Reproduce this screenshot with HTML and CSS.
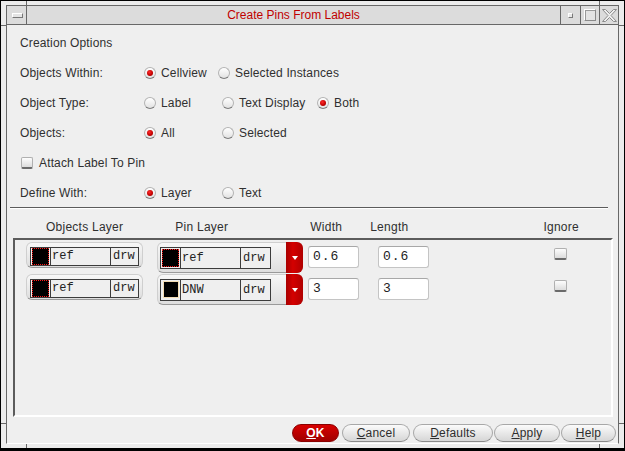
FILE: index.html
```html
<!DOCTYPE html>
<html>
<head>
<meta charset="utf-8">
<link rel="stylesheet" href="styles.css">
</head>
<body>
<div class="window">
  <span class="mark mv m-tl"></span>
  <span class="mark mv m-tr"></span>
  <span class="mark mv m-bl"></span>
  <span class="mark mv m-br"></span>
  <span class="mark mh m-lt"></span>
  <span class="mark mh m-rt"></span>
  <span class="mark mh m-lb"></span>
  <span class="mark mh m-rb"></span>
  <div class="frame">
    <div class="titlebar">
      <div class="tb-menu"><span class="menu-bar"></span></div>
      <div class="tb-title">Create Pins From Labels</div>
      <div class="tb-btn tb-min"><span class="min-glyph"></span></div>
      <div class="tb-btn tb-max"><span class="max-glyph"></span></div>
      <div class="tb-btn tb-close">
        <svg width="15" height="13" viewBox="0 0 15 13"><polygon points="0.5,0.5 3.5,0.5 7.5,4.5 11.5,0.5 14.5,0.5 9,6.5 14.5,12.5 11.5,12.5 7.5,8.5 3.5,12.5 0.5,12.5 6,6.5" fill="#efefef" stroke="#8c8c8c" stroke-width="1"/></svg>
      </div>
    </div>
    <div class="content">
      <div class="options">
        <div class="row"><span class="section">Creation Options</span></div>
        <div class="row">
          <span class="label">Objects Within:</span>
          <span class="opt w74"><span class="radio on"></span>Cellview</span>
          <span class="opt"><span class="radio"></span>Selected Instances</span>
        </div>
        <div class="row">
          <span class="label">Object Type:</span>
          <span class="opt w78"><span class="radio"></span>Label</span>
          <span class="opt w95"><span class="radio"></span>Text Display</span>
          <span class="opt"><span class="radio on"></span>Both</span>
        </div>
        <div class="row">
          <span class="label">Objects:</span>
          <span class="opt w78"><span class="radio on"></span>All</span>
          <span class="opt"><span class="radio"></span>Selected</span>
        </div>
        <div class="row">
          <span class="opt check-opt"><span class="checkbox"></span>Attach Label To Pin</span>
        </div>
        <div class="row last">
          <span class="label">Define With:</span>
          <span class="opt w78"><span class="radio on"></span>Layer</span>
          <span class="opt"><span class="radio"></span>Text</span>
        </div>
      </div>
      <div class="sep"></div>
      <div class="thead">
        <span class="th th-obj">Objects Layer</span>
        <span class="th th-pin">Pin Layer</span>
        <span class="th th-width">Width</span>
        <span class="th th-length">Length</span>
        <span class="th th-ignore">Ignore</span>
      </div>
      <div class="panel">
        <div class="trow">
          <div class="objw">
            <div class="lbox">
              <span class="sw"><span class="chip dotted"></span></span>
              <span class="lname">ref</span>
              <span class="lpurp">drw</span>
            </div>
          </div>
          <div class="pinw">
            <div class="lbox pbox">
              <span class="sw"><span class="chip dotted"></span></span>
              <span class="lname">ref</span>
              <span class="lpurp">drw</span>
            </div>
            <span class="drop"><span class="tri"></span></span>
          </div>
          <div class="inp inp-w">0.6</div>
          <div class="inp inp-l">0.6</div>
          <span class="checkbox ign"></span>
        </div>
        <div class="trow">
          <div class="objw">
            <div class="lbox">
              <span class="sw"><span class="chip dotted"></span></span>
              <span class="lname">ref</span>
              <span class="lpurp">drw</span>
            </div>
          </div>
          <div class="pinw">
            <div class="lbox pbox">
              <span class="sw"><span class="chip beige"></span></span>
              <span class="lname">DNW</span>
              <span class="lpurp">drw</span>
            </div>
            <span class="drop"><span class="tri"></span></span>
          </div>
          <div class="inp inp-w">3</div>
          <div class="inp inp-l">3</div>
          <span class="checkbox ign"></span>
        </div>
      </div>
      <div class="buttons">
        <span class="btn btn-ok"><u>O</u>K</span>
        <span class="btn btn-cancel"><u>C</u>ancel</span>
        <span class="btn btn-defaults"><u>D</u>efaults</span>
        <span class="btn btn-apply"><u>A</u>pply</span>
        <span class="btn btn-help"><u>H</u>elp</span>
      </div>
    </div>
  </div>
</div>
</body>
</html>
```

FILE: styles.css
```css
* { box-sizing: border-box; }
html, body { margin: 0; padding: 0; }
body {
  width: 625px;
  height: 451px;
  overflow: hidden;
  font-family: "Liberation Sans", Arial, sans-serif;
  font-size: 12px;
  color: #303030;
  background: #efefef;
}
.window {
  position: relative;
  width: 625px;
  height: 451px;
  border: 1px solid #000;
  border-bottom-width: 3px;
  background: #ececec;
  padding: 4px 5px;
  display: flex;
}
/* resize-corner ticks on the window border */
.mark { position: absolute; background: #686868; }
.mv { width: 1px; }
.mh { height: 1px; width: 5px; }
.m-tl { left: 25px; top: 0; height: 5px; }
.m-tr { left: 598px; top: 0; height: 5px; }
.m-bl { left: 25px; top: 443px; height: 4px; }
.m-br { left: 598px; top: 443px; height: 4px; }
.m-lt { left: 0; top: 24px; }
.m-rt { left: 618px; top: 24px; }
.m-lb { left: 0; top: 422px; }
.m-rb { left: 618px; top: 422px; }
.frame {
  flex: 1;
  display: flex;
  flex-direction: column;
  border: 1px solid #686868;
  border-bottom-color: #fff;
  background: #efefef;
}
/* title bar */
.titlebar {
  height: 19px;
  flex: none;
  display: flex;
  background: #dcdcdc;
  border-bottom: 1px solid #686868;
}
.tb-menu {
  width: 20px;
  border-right: 1px solid #686868;
  display: flex;
  align-items: center;
  justify-content: center;
}
.menu-bar {
  width: 11px;
  height: 5px;
  margin-left: 1px;
  background: #e4e4e4;
  border: 1px solid #fff;
  border-right-color: #777;
  border-bottom-color: #777;
}
.tb-title {
  flex: 1;
  text-align: center;
  color: #c00000;
  line-height: 18px;
}
.tb-btn {
  border-left: 1px solid #686868;
  display: flex;
  align-items: center;
  justify-content: center;
}
.tb-min { width: 20px; }
.tb-max { width: 19px; }
.tb-close { width: 19px; }
.min-glyph {
  width: 5px;
  height: 5px;
  border: 1px solid #fff;
  border-right-color: #7a7a7a;
  border-bottom-color: #7a7a7a;
  background: #e8e8e8;
}
.max-glyph {
  width: 12px;
  height: 12px;
  border: 1px solid #fff;
  border-right-color: #8a8a8a;
  border-bottom-color: #8a8a8a;
  box-shadow: inset 1px 1px 0 #9a9a9a;
  background: #e4e4e4;
}
.tb-close svg { display: block; }
/* content */
.content {
  flex: 1;
  display: flex;
  flex-direction: column;
  padding-top: 3px;
}
.options { padding-left: 13px; }
.row {
  height: 30px;
  display: flex;
  align-items: center;
  letter-spacing: 0.15px;
}
.row.last { height: 29px; }
.label { width: 124px; }
.opt { display: flex; align-items: center; }
.w74 { width: 74px; }
.w78 { width: 78px; }
.w95 { width: 95px; }
.radio {
  position: relative;
  width: 12px;
  height: 12px;
  margin-right: 5px;
  border-radius: 50%;
  border: 1px solid #b4b4b4;
  border-bottom-color: #7c7c7c;
  background: linear-gradient(#ffffff, #e2e2e2);
  flex: none;
}
.radio.on::after {
  content: "";
  position: absolute;
  left: 2px;
  top: 2px;
  width: 6px;
  height: 6px;
  border-radius: 50%;
  background: radial-gradient(circle at 40% 35%, #ff2a2a, #c00000 60%, #8a0000);
}
.checkbox {
  width: 12px;
  height: 12px;
  border: 1px solid #b0b0b0;
  border-bottom: 2px solid #6a6a6a;
  border-radius: 2px;
  background: linear-gradient(#fdfdfd, #dcdcdc);
  flex: none;
}
.check-opt { padding-left: 1px; }
.check-opt .checkbox { margin-right: 6px; }
.sep {
  height: 2px;
  margin: 0 10px 0 3px;
  border-top: 1px solid #5c5c5c;
  border-bottom: 1px solid #fff;
  flex: none;
}
/* table */
.thead {
  height: 29px;
  flex: none;
  display: flex;
  align-items: flex-end;
  padding-bottom: 4px;
  letter-spacing: 0.25px;
}
.th-obj { margin-left: 39px; }
.th-pin { margin-left: 52px; }
.th-width { margin-left: 82px; }
.th-length { margin-left: 28px; }
.th-ignore { margin-left: 135px; }
.panel {
  flex: 1;
  margin: 0 5px 0 6px;
  border: 2px solid #5c5c5c;
  border-right-color: #fff;
  border-bottom-color: #fff;
  padding: 2px 0 0 11px;
}
.trow {
  height: 32px;
  display: flex;
  align-items: flex-start;
}
.objw {
  width: 117px;
  height: 26px;
  padding: 4px 3px 3px 3px;
  border-radius: 6px;
  border: 1px solid #cfcfcf;
  border-bottom-color: #9a9a9a;
  background: linear-gradient(#f7f7f7, #dedede);
}
.lbox {
  height: 19px;
  display: flex;
  border: 1px solid #3c3c3c;
  background: #efefef;
  font-family: "Liberation Mono", "Courier New", monospace;
  font-size: 12px;
  color: #222;
}
.sw {
  width: 20px;
  border-right: 1px solid #3c3c3c;
  display: flex;
  align-items: center;
  justify-content: center;
  flex: none;
}
.chip {
  width: 17px;
  height: 17px;
  background: #000;
}
.chip.dotted { border: 1px dotted #ff1a1a; }
.chip.beige { width: 16px; height: 16px; border: 1px solid #f3dcb4; }
.lname {
  width: 60px;
  padding-left: 1px;
  border-right: 1px solid #3c3c3c;
  line-height: 17px;
}
.lpurp {
  flex: 1;
  padding-left: 2px;
  line-height: 17px;
}
.pinw {
  margin-left: 14px;
  width: 146px;
  height: 31px;
  display: flex;
  align-items: center;
  padding-left: 2px;
  border-radius: 6px;
  border: 1px solid #cfcfcf;
  border-bottom-color: #9a9a9a;
  background: linear-gradient(#f7f7f7, #dedede);
}
.pbox {
  width: 111px;
  height: 22px;
}
.pbox .lname { width: 60px; line-height: 20px; }
.pbox .lpurp { line-height: 20px; }
.pbox .chip { width: 17px; height: 18px; }
.pbox .chip.beige { width: 16px; height: 17px; }
.drop {
  margin-left: auto;
  margin-right: -1px;
  width: 17px;
  height: 31px;
  border-radius: 0 6px 6px 0;
  background: linear-gradient(90deg, #a80000, #d40000 40%, #b00000);
  display: flex;
  align-items: center;
  justify-content: center;
}
.tri {
  width: 0;
  height: 0;
  border-left: 3px solid transparent;
  border-right: 3px solid transparent;
  border-top: 4px solid #fff;
  margin-top: 1px;
}
.inp {
  width: 51px;
  height: 22px;
  margin-top: 4px;
  border: 1px solid #c4c4c4;
  border-top-color: #a8a8a8;
  border-radius: 3px;
  background: #fff;
  padding-left: 4px;
  font-family: "Liberation Mono", monospace;
  font-size: 13px;
  letter-spacing: 1px;
  line-height: 20px;
  color: #222;
}
.inp-w { margin-left: 5px; }
.inp-l { margin-left: 19px; }
.ign {
  margin-left: 125px;
  margin-top: 6px;
  width: 13px;
}
/* buttons */
.buttons {
  height: 26px;
  flex: none;
  display: flex;
  justify-content: flex-end;
  align-items: flex-start;
  padding: 7px 2px 0 0;
}
.btn {
  height: 18px;
  border-radius: 9px;
  border: 1px solid #a8a8a8;
  border-bottom-color: #8a8a8a;
  background: linear-gradient(#fbfbfb, #d6d6d6);
  display: flex;
  align-items: center;
  justify-content: center;
  color: #2e2e2e;
  letter-spacing: 0.2px;
}
.btn-ok {
  width: 47px;
  border-color: #8a0000;
  background: linear-gradient(#d80000, #a00000);
  color: #fff;
  font-weight: bold;
}
.btn-cancel { width: 68px; margin-left: 3px; }
.btn-defaults { width: 80px; margin-left: 3px; }
.btn-apply { width: 66px; margin-left: 1px; }
.btn-help { width: 55px; margin-left: 1px; }
```
